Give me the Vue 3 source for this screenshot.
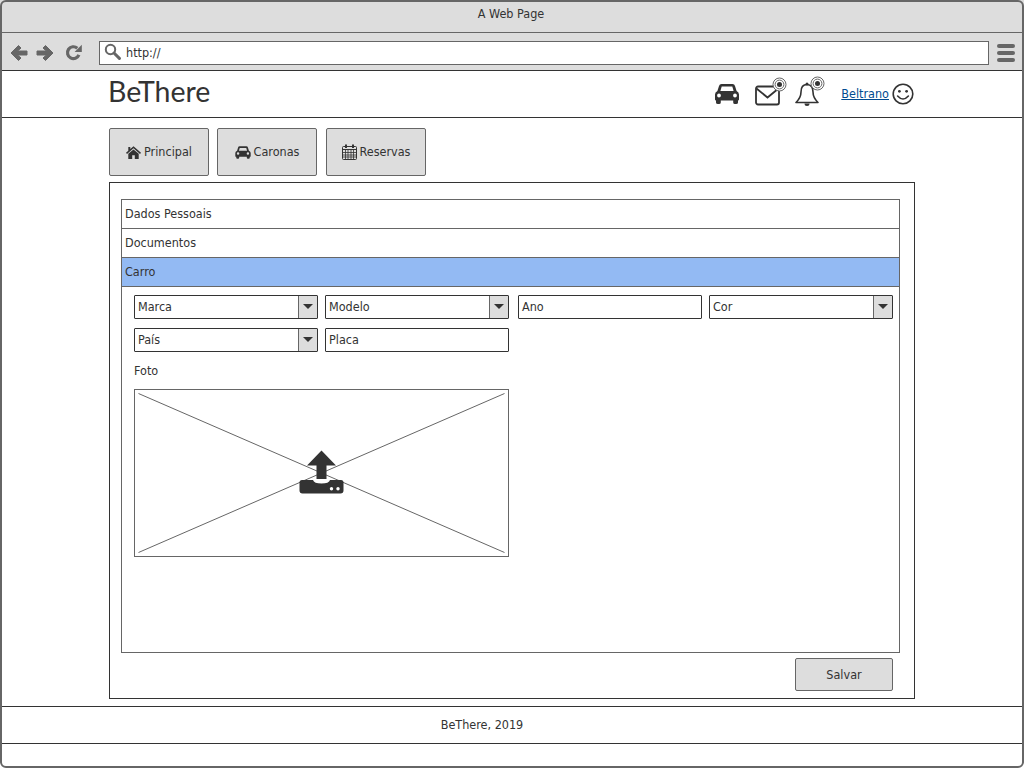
<script setup>
const tabs = [
  { label: 'Principal', icon: 'home' },
  { label: 'Caronas', icon: 'car' },
  { label: 'Reservas', icon: 'cal' },
]
const rows = ['Dados Pessoais', 'Documentos']
</script>

<template>
  <div class="window">
    <div class="titlebar">A Web Page</div>
    <div class="toolbar">
      <svg class="nav" width="18" height="18" viewBox="0 0 18 18"><path d="M8.5 1.5 L1 9 L8.5 16.5 L11 14 L7.6 11 H17 V7 H7.6 L11 4 Z" fill="#666" stroke="#666" stroke-linejoin="round"/></svg>
      <svg class="nav fwd" width="18" height="18" viewBox="0 0 18 18"><path d="M9.5 1.5 L17 9 L9.5 16.5 L7 14 L10.4 11 H1 V7 H10.4 L7 4 Z" fill="#666" stroke="#666" stroke-linejoin="round"/></svg>
      <svg class="nav reload" width="17" height="17" viewBox="0 0 17 17"><path d="M13.9 10.8 A5.9 5.9 0 1 1 12.300 4.200" fill="none" stroke="#666" stroke-width="3.200"/><path d="M16.800 0.800 V8 H9.600 Z" fill="#666"/></svg>
      <div class="url">
        <svg width="17" height="17" viewBox="0 0 17 17"><circle cx="6.5" cy="6.5" r="4.7" fill="none" stroke="#666" stroke-width="2"/><path d="M10 10 L15.4 15.4" stroke="#666" stroke-width="3" stroke-linecap="round"/></svg>
        <span>http://</span>
      </div>
      <div class="burger"><i></i><i></i><i></i></div>
    </div>

    <header class="header">
      <div class="brand">BeThere</div>
      <div class="tools">
        <svg class="i-car" width="26" height="22" viewBox="0 0 26 22"><path fill="#333" fill-rule="evenodd" d="M7.5 1 H18.5 Q20.5 1 21 3 L22.6 8 Q25 9 25 11.5 V16.5 Q25 17.5 24 17.5 V19.5 Q24 21 22 21 H21 Q19.2 21 19.2 19.5 V17.5 H6.8 V19.5 Q6.8 21 5 21 H4 Q2 21 2 19.5 V17.5 Q1 17.5 1 16.5 V11.5 Q1 9 3.4 8 L5 3 Q5.5 1 7.5 1 Z M7.7 3.6 L6.4 8 H19.6 L18.3 3.6 Z M5 10.6 A1.9 1.9 0 1 0 5 14.4 A1.9 1.9 0 1 0 5 10.6 Z M21 10.6 A1.9 1.9 0 1 0 21 14.4 A1.9 1.9 0 1 0 21 10.6 Z"/></svg>
        <span class="badged mail">
          <svg width="26" height="21" viewBox="0 0 26 21"><rect x="1" y="1.500" width="23" height="18" rx="2" fill="#fff" stroke="#333" stroke-width="1.800"/><path d="M1.500 3.500 L12.500 12.500 L23.500 3.500" fill="none" stroke="#333" stroke-width="1.800"/></svg>
          <svg class="radar" width="15" height="15" viewBox="0 0 15 15"><circle cx="7.5" cy="7.5" r="6.5" fill="#fff" stroke="#666"/><circle cx="7.5" cy="7.5" r="4.4" fill="none" stroke="#666"/><circle cx="7.5" cy="7.5" r="2.500" fill="#333"/></svg>
        </span>
        <span class="badged bell">
          <svg width="24" height="25" viewBox="0 0 24 25"><path d="M12 2.5 C7.5 2.5 6 6.5 6 10 C6 15 4 17.5 1 20.500 H23 C20 17.5 18 15 18 10 C18 6.5 16.5 2.5 12 2.5 Z" fill="#fff" stroke="#333" stroke-width="1.6" stroke-linejoin="round"/><circle cx="12" cy="2" r="1.5" fill="#333"/><path d="M9.5 21.500 A2.5 2.5 0 0 0 14.5 21.500 Z" fill="#333"/></svg>
          <svg class="radar" width="15" height="15" viewBox="0 0 15 15"><circle cx="7.5" cy="7.5" r="6.5" fill="#fff" stroke="#666"/><circle cx="7.5" cy="7.5" r="4.4" fill="none" stroke="#666"/><circle cx="7.5" cy="7.5" r="2.500" fill="#333"/></svg>
        </span>
        <a class="user" href="#">Beltrano</a>
        <svg class="smile" width="22" height="22" viewBox="0 0 22 22"><circle cx="11" cy="11" r="9.8" fill="none" stroke="#333" stroke-width="1.6"/><circle cx="7.4" cy="8.3" r="1.4" fill="#333"/><circle cx="14.6" cy="8.3" r="1.4" fill="#333"/><path d="M5.6 13 Q11 19 16.4 13" fill="none" stroke="#333" stroke-width="1.6" stroke-linecap="round"/></svg>
      </div>
    </header>

    <main class="main">
      <nav class="tabs">
        <button v-for="t in tabs" :key="t.label" class="btn tab">
          <svg v-if="t.icon === 'home'" width="15" height="13" viewBox="0 0 15 13"><path fill="#333" d="M7.5 0.3 L15 6.8 L14 7.9 L7.5 2.3 L1 7.9 L0 6.8 L2.3 4.8 V1 H4.3 V3.1 Z M7.5 3.4 L12.7 7.8 V13 H8.8 V9.2 H6.2 V13 H2.3 V7.8 Z"/></svg>
          <svg v-else-if="t.icon === 'car'" width="16" height="13" viewBox="0 0 26 21"><path fill="#333" fill-rule="evenodd" d="M7.5 0.5 H18.5 Q20.5 0.5 21 2.5 L22.6 7.5 Q25.5 8.5 25.5 11.5 V16.5 Q25.5 17.5 24 17.5 V19 Q24 20.5 22 20.5 H21 Q19.2 20.5 19.2 19 V17.5 H6.8 V19 Q6.8 20.5 5 20.5 H4 Q2 20.5 2 19 V17.5 Q0.5 17.5 0.5 16.5 V11.5 Q0.5 8.5 3.4 7.5 L5 2.5 Q5.5 0.5 7.5 0.5 Z M7.7 3.2 L6.4 7.5 H19.6 L18.3 3.2 Z M5 10.2 A2 2 0 1 0 5 14.2 A2 2 0 1 0 5 10.2 Z M21 10.2 A2 2 0 1 0 21 14.2 A2 2 0 1 0 21 10.2 Z"/></svg>
          <svg v-else width="15" height="16" viewBox="0 0 15 16"><rect x="0.5" y="2.5" width="14" height="13" rx="1" fill="none" stroke="#333"/><path d="M0.5 5.500 H14.5" stroke="#333" fill="none"/><path d="M3.5 6 V15 M6 6 V15 M9 6 V15 M11.5 6 V15 M1 8.5 H14 M1 11 H14 M1 13 H14" stroke="#333" stroke-width="0.8" fill="none"/><path d="M4 0.5 V4 M11 0.5 V4" stroke="#333" stroke-width="2"/></svg>
          <span class="tab-label">{{ t.label }}</span>
        </button>
      </nav>

      <section class="panel">
        <div class="accordion">
          <div v-for="r in rows" :key="r" class="acc-row">{{ r }}</div>
          <div class="acc-row active">Carro</div>
          <div class="form">
            <div class="line">
              <div class="field select"><span>Marca</span><b></b></div>
              <div class="field select"><span>Modelo</span><b></b></div>
              <div class="field third"><span>Ano</span></div>
              <div class="field select"><span>Cor</span><b></b></div>
            </div>
            <div class="line">
              <div class="field select"><span>País</span><b></b></div>
              <div class="field"><span>Placa</span></div>
            </div>
            <div class="label">Foto</div>
            <div class="photo">
              <svg width="373" height="166" viewBox="0 0 373 166">
                <path d="M3.5 3.5 L369.5 162.5 M369.5 3.5 L3.5 162.5" stroke="#666" fill="none"/>
                <path fill="#333" d="M186.5 60.5 L201 75.5 H191.5 V89 H181.5 V75.5 H172 Z"/>
                <path fill="#333" d="M167 90 H178 Q179 93.500 186.500 93.500 Q194 93.500 195 90 H206 Q208.500 90 208.500 92.500 V100.500 Q208.500 103.500 205.500 103.500 H167.500 Q164.500 103.500 164.500 100.500 V92.500 Q164.500 90 167 90 Z"/>
                <circle cx="196.500" cy="98.800" r="1.700" fill="#fff"/><circle cx="203" cy="98.800" r="1.700" fill="#fff"/>
              </svg>
            </div>
          </div>
        </div>
        <div class="actions"><button class="btn save">Salvar</button></div>
      </section>
    </main>

    <footer class="footer">BeThere, 2019</footer>
  </div>
</template>

<style>
html, body { margin: 0; padding: 0; background: #fff; }
</style>

<style scoped>
* { box-sizing: border-box; }
.window {
  position: relative;
  width: 1024px;
  height: 768px;
  overflow: hidden;
  display: flex;
  flex-direction: column;
  font-family: "DejaVu Sans", sans-serif;
  font-stretch: condensed;
  font-size: 12.5px;
  color: #333;
  background: #fff;
}
.window::after {
  content: "";
  position: absolute;
  inset: 0;
  border: 2px solid #666;
  border-radius: 6px;
  pointer-events: none;
}
.titlebar {
  height: 33px;
  background: #ddd;
  border-bottom: 1px solid #666;
  text-align: center;
  padding-top: 7px;
  padding-right: 2px;
  line-height: 14px;
}
.toolbar {
  height: 37px;
  background: #ddd;
  display: flex;
  align-items: center;
  padding-left: 10px;
  padding-top: 2px;
}
.nav { flex: none; }
.fwd { margin-left: 8px; }
.reload { margin-left: 11px; }
.url {
  width: 890px;
  height: 24px;
  margin-left: 17px;
  background: #fff;
  border: 1px solid #666;
  display: flex;
  align-items: center;
  padding-left: 4px;
  gap: 5px;
}
.url svg { margin-top: -3px; }
.burger {
  margin-left: 8px;
  width: 18px;
  display: flex;
  flex-direction: column;
  gap: 3px;
}
.burger i { height: 4px; background: #666; border-radius: 2px; }
.header {
  height: 48px;
  border: 1px solid #333;
  display: flex;
  align-items: center;
  justify-content: space-between;
  padding: 0 109px 0 107px;
  flex: none;
}
.brand {
  font-family: "Lato", sans-serif;
  font-stretch: normal;
  font-size: 28.5px;
  line-height: 40px;
  margin-top: -6px;
  color: #333;
}
.tools { display: flex; align-items: center; }
.badged { position: relative; display: block; height: 25px; }
.radar { position: absolute; }
.mail { margin-left: 15px; padding-top: 3px; }
.mail .radar { top: -5px; left: 17px; }
.bell { margin-left: 14px; margin-top: 1px; }
.bell .radar { top: -6px; left: 15px; }
.user { margin-left: 22px; margin-top: -2px; color: #004b91; text-decoration: underline; }
.smile { margin-left: 3px; }
.main {
  flex: 1;
  padding: 10px 109px 0;
  display: flex;
  flex-direction: column;
}
.tabs { display: flex; gap: 8px; }
.btn {
  font: inherit;
  font-stretch: condensed;
  color: #333;
  background: #ddd;
  border: 1px solid #666;
  border-radius: 2px;
  padding: 0;
}
.tab {
  width: 100px;
  height: 48px;
  display: flex;
  align-items: center;
  justify-content: center;
  gap: 3px;
}
.tab-label { margin-top: -2px; }
.tab:nth-child(3) { margin-left: 1px; }
.panel {
  width: 806px;
  height: 517px;
  margin-top: 6px;
  border: 1px solid #333;
  padding: 16px 14px 0 11px;
}
.accordion {
  width: 779px;
  height: 454px;
  border: 1px solid #666;
}
.acc-row {
  height: 29px;
  line-height: 28px;
  padding-left: 3px;
  border-bottom: 1px solid #666;
}
.acc-row.active { background: #93baf3; }
.form { padding: 8px 6px 0 12px; }
.line { display: flex; gap: 7px; margin-bottom: 9px; }
.field {
  width: 184px;
  height: 24px;
  border: 1px solid #333;
  border-radius: 1px;
  background: #fff;
  display: flex;
  align-items: center;
  justify-content: space-between;
  padding-left: 3px;
}
.field span { margin-top: -2px; }
.third { margin-left: 2px; }
.select { padding-right: 0; }
.select b {
  width: 19px;
  height: 22px;
  background: #ddd;
  border-left: 1px solid #666;
  position: relative;
}
.select b::after {
  content: "";
  position: absolute;
  left: 4px;
  top: 8px;
  border-left: 5px solid transparent;
  border-right: 5px solid transparent;
  border-top: 5px solid #333;
}
.label { height: 28px; line-height: 20px; }
.photo {
  width: 375px;
  height: 168px;
  border: 1px solid #666;
}
.photo svg { display: block; }
.actions { display: flex; justify-content: flex-end; padding-top: 5px; }
.save { width: 98px; height: 33px; margin-right: 7px; }
.footer {
  height: 38px;
  margin-bottom: 24px;
  flex: none;
  border: 1px solid #333;
  text-align: center;
  line-height: 36px;
  padding-right: 60px;
}
</style>
